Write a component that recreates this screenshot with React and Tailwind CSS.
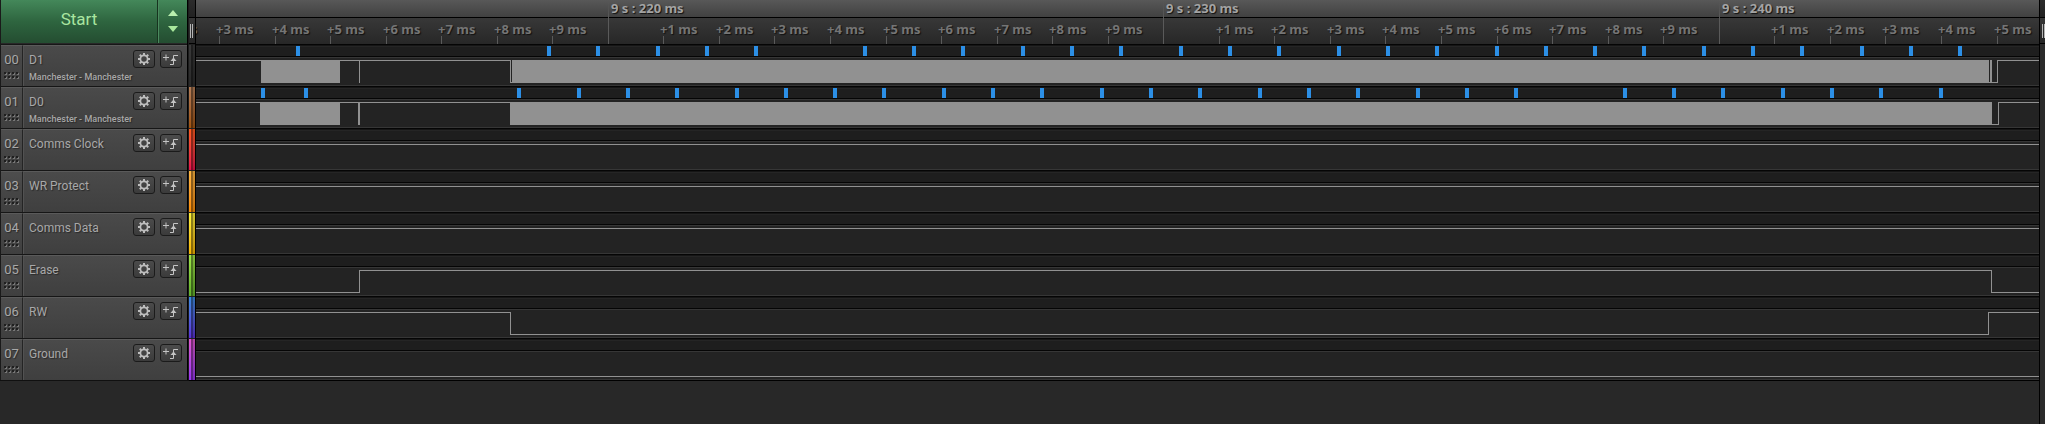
import React, { useLayoutEffect, useRef, useState } from "react";

const ROW_H = 42;
const AXIS_ORIGIN = 412;
const PX_PER_MS = 55.55;

const D1_FRAMES = [
  100, 351, 400, 460, 509, 558, 667, 716, 765, 825, 874, 923, 983, 1032, 1081, 1141, 1190, 1239, 1299, 1348, 1397,
  1446, 1506, 1555, 1604, 1664, 1713, 1762,
];
const D0_FRAMES = [
  65, 108, 321, 381, 430, 479, 539, 588, 637, 686, 746, 795, 844, 904, 953, 1002, 1062, 1111, 1160, 1220, 1269, 1318,
  1427, 1476, 1525, 1585, 1634, 1683, 1743,
];

// Each wave is a list of [x, level] edges; bursts are too dense to resolve and are drawn solid.
const CHANNELS = [
  {
    id: "00", name: "D1", analyzer: "Manchester - Manchester", strip: "from-[#3a3a3a] to-[#2a2a2a]",
    frames: D1_FRAMES, start: 1, edges: [[314, 0], [1801, 1]],
    bursts: [[65, 79], [163, 1], [316, 1477], [1794, 2]],
  },
  {
    id: "01", name: "D0", analyzer: "Manchester - Manchester", strip: "from-[#b27c55] to-[#a0540f]",
    frames: D0_FRAMES, start: 1, edges: [[314, 0], [1802, 1]],
    bursts: [[64, 80], [162, 2], [314, 1482]],
  },
  { id: "02", name: "Comms Clock", strip: "from-[#ff5a1c] to-[#e5104a]", start: 1, edges: [] },
  { id: "03", name: "WR Protect", strip: "from-[#fdb540] to-[#fb8c00]", start: 1, edges: [] },
  { id: "04", name: "Comms Data", strip: "from-[#fbf03a] to-[#f5b400]", start: 1, edges: [] },
  { id: "05", name: "Erase", strip: "from-[#a0e548] to-[#62b02c]", start: 0, edges: [[163, 1], [1795, 0]] },
  { id: "06", name: "RW", strip: "from-[#3a8ae0] to-[#5a30d8]", start: 1, edges: [[314, 0], [1792, 1]] },
  { id: "07", name: "Ground", strip: "from-[#e056d0] to-[#9a35f0]", start: 0, edges: [] },
];

const levelY = (level) => (level ? 16 : 38);

function GearIcon() {
  return (
    <svg viewBox="0 0 12 12" className="h-3 w-3" aria-hidden="true">
      <circle cx="6" cy="6" r="3.6" fill="none" stroke="#bdbdbd" strokeWidth="1.7" />
      {[0, 45, 90, 135, 180, 225, 270, 315].map((a) => (
        <rect key={a} x="5" y="0" width="2" height="2.2" fill="#bdbdbd" transform={`rotate(${a} 6 6)`} />
      ))}
    </svg>
  );
}

function TriggerIcon() {
  return (
    <svg viewBox="0 0 16 12" className="h-3 w-4 shrink-0" aria-hidden="true">
      <path d="M0 4.5H6M3 1.5V7.5" fill="none" stroke="#c4c4c4" />
      <path d="M7 11.5H10.5V2.5H15" fill="none" stroke="#c4c4c4" />
      <path d="M10.5 4.5L13.5 8H7.5Z" fill="#c4c4c4" />
    </svg>
  );
}

function Grip() {
  return (
    <svg viewBox="0 0 15 8" className="h-2 w-[15px]" aria-hidden="true">
      {[0, 4, 8, 12].map((x) =>
        [0, 4].map((y) => (
          <g key={`${x}-${y}`}>
            <rect x={x + 1} y={y + 1} width="2" height="2" fill="#777" />
            <rect x={x} y={y} width="2" height="2" fill="#1f1f1f" />
          </g>
        ))
      )}
    </svg>
  );
}

function IconButton({ label, children }) {
  return (
    <button
      type="button"
      aria-label={label}
      className="flex h-[18px] w-[22px] items-center justify-center rounded-[3px] border border-[#1b1b1b] bg-linear-to-b from-[#4b4b4b] to-[#3b3b3b]"
    >
      {children}
    </button>
  );
}

function ChannelRow({ channel }) {
  return (
    <li className="flex h-[42px] border-t border-[#161616] text-[#a8a8a8] [text-shadow:1px_1px_1px_#2a2a2a]">
      <div className="flex w-[22px] flex-col items-center gap-[3px] border-t border-r border-t-[#5a5a5a] border-r-[#242424] bg-linear-to-b from-[#4d4d4d] to-[#3f3f3f] pt-[5px]">
        <span className="text-[13px] leading-[18px]">{channel.id}</span>
        <Grip />
      </div>
      <div className="flex flex-1 items-start justify-between border-t border-l border-t-[#5a5a5a] border-l-[#525252] bg-linear-to-b from-[#4a4a4a] to-[#3f3f3f] pr-[5px] pl-[5px]">
        <div className="pt-[5px]">
          <div className="text-[12px] leading-[18px] whitespace-nowrap">{channel.name}</div>
          {channel.analyzer && (
            <div className="text-[9px] leading-4 font-medium whitespace-nowrap">{channel.analyzer}</div>
          )}
        </div>
        <div className="flex gap-[5px] pt-1">
          <IconButton label={`${channel.name} settings`}>
            <GearIcon />
          </IconButton>
          <IconButton label={`${channel.name} trigger`}>
            <TriggerIcon />
          </IconButton>
        </div>
      </div>
    </li>
  );
}

function Wave({ channel }) {
  let level = channel.start;
  let d = `M0 ${levelY(level) + 0.5}`;
  channel.edges.forEach(([x, next]) => {
    d += `H${x + 0.5}V${levelY(next) + 0.5}`;
    level = next;
  });
  d += "H9000";
  return (
    <svg className="block h-[42px] w-full" shapeRendering="crispEdges" role="img" aria-label={`${channel.name} signal`}>
      <rect width="100%" height={ROW_H} fill="#232323" />
      <rect width="100%" height="12" fill="#1e1e1e" />
      <rect width="100%" height="1" fill="#050505" />
      <rect y="1" width="100%" height="1" fill="#151515" />
      <rect y="2" width="100%" height="1" fill="#252525" />
      <rect y="12" width="100%" height="1" fill="#050505" />
      <rect y="13" width="100%" height="1" fill="#363636" />
      <rect y="41" width="100%" height="1" fill="#363636" />
      <path d={d} fill="none" stroke="#919191" strokeWidth="1" />
      {(channel.bursts || []).map(([x, w]) => (
        <rect key={x} x={x} y="16" width={w} height="23" fill="#919191" />
      ))}
      {(channel.frames || []).map((x) => (
        <rect key={x} x={x} y="2" width="4" height="10" fill="#2c8fe6" />
      ))}
    </svg>
  );
}

function Ruler() {
  const ref = useRef(null);
  const [width, setWidth] = useState(0);
  useLayoutEffect(() => {
    const measure = () => setWidth(ref.current.clientWidth);
    measure();
    const observer = new ResizeObserver(measure);
    observer.observe(ref.current);
    return () => observer.disconnect();
  }, []);

  const ticks = [];
  for (let n = -8; AXIS_ORIGIN + n * PX_PER_MS < width; n += 1) ticks.push(n);
  return (
    <div
      ref={ref}
      className="relative h-11 overflow-hidden font-['Noto_Sans',sans-serif] text-[13px] leading-4 font-bold whitespace-nowrap [text-shadow:1px_1px_1px_#111]"
    >
      <div className="h-[17px] bg-linear-to-b from-[#585858] to-[#414141]" />
      <div className="h-[27px] border-t border-black bg-linear-to-b from-[#383838] to-[#272727]" />
      {ticks.map((n) => {
        const x = Math.floor(AXIS_ORIGIN + n * PX_PER_MS + 0.3);
        const ms = ((n % 10) + 10) % 10;
        return ms === 0 ? (
          <div key={n} className="absolute top-0 h-11" style={{ left: x }}>
            <div className="h-full w-px bg-linear-to-b from-transparent to-[#5a5a5a] to-40%" />
            <span className="absolute top-0 left-[3px] text-[#a3a3a3]">{`9 s : ${220 + n} ms`}</span>
          </div>
        ) : (
          <div key={n} className="absolute top-9 h-2 w-px bg-[#5a5a5a]" style={{ left: x }}>
            <span className="absolute -top-[15px] -left-[3px] text-[#757575]">{`+${ms} ms`}</span>
          </div>
        );
      })}
    </div>
  );
}

function GutterHead({ align }) {
  return (
    <div className="h-11 border-b border-black">
      <div className="h-[17px] bg-linear-to-b from-[#2c2c2c] to-[#222]" />
      <div
        className={`flex h-[26px] gap-px border-t border-black bg-linear-to-b from-[#363636] to-[#262626] pt-[6px] ${align}`}
      >
        <div className="h-[14px] w-px bg-[#b5b5b5]" />
        <div className="h-[14px] w-px bg-[#b5b5b5]" />
      </div>
    </div>
  );
}

export default function App() {
  return (
    <main className="flex min-h-screen items-start bg-[#282828] font-['Roboto',sans-serif]">
      <section className="w-[188px] shrink-0 border-b border-[#101010]">
        <div className="flex h-11 border-r border-l border-r-black border-l-[#1a1a1a] pb-px">
          <button
            type="button"
            className="flex-1 border-r border-[#17331f] bg-linear-to-b from-[#44885a] via-[#2e653f] to-[#244d31] pb-[3px] text-[17px] text-[#a9e5a0]"
          >
            Start
          </button>
          <button
            type="button"
            aria-label="Capture options"
            className="flex w-[29px] items-center justify-center border-l border-[#4b8a5e] bg-linear-to-b from-[#44885a] via-[#2e653f] to-[#244d31] pb-px"
          >
            <svg viewBox="0 0 10 22" className="h-[22px] w-[10px]" aria-hidden="true">
              <path d="M5 0L10 6H0Z" fill="#b9efae" />
              <path d="M5 22L10 16H0Z" fill="#a9e79c" />
            </svg>
          </button>
        </div>
        <ul className="border-r border-l border-r-black border-l-[#1a1a1a]">
          {CHANNELS.map((c) => (
            <ChannelRow key={c.id} channel={c} />
          ))}
        </ul>
      </section>

      <div className="w-2 shrink-0 border-r border-b border-l border-r-black border-b-black border-l-[#1c1c1c]">
        <GutterHead align="pl-px" />
        {CHANNELS.map((c) => (
          <div key={c.id} className={`flex h-[42px] border-t border-[#222] bg-linear-to-b ${c.strip}`}>
            <div className="w-0.5" />
            <div className="w-0.5 bg-black/45" />
            <div className="w-0.5 bg-black/20" />
          </div>
        ))}
      </div>

      <section className="min-w-0 flex-1 border-b border-black">
        <Ruler />
        {CHANNELS.map((c) => (
          <Wave key={c.id} channel={c} />
        ))}
      </section>

      <div className="w-1.5 shrink-0 self-stretch border-l border-black bg-[#2b2b2b]">
        <GutterHead align="justify-end" />
      </div>
    </main>
  );
}
